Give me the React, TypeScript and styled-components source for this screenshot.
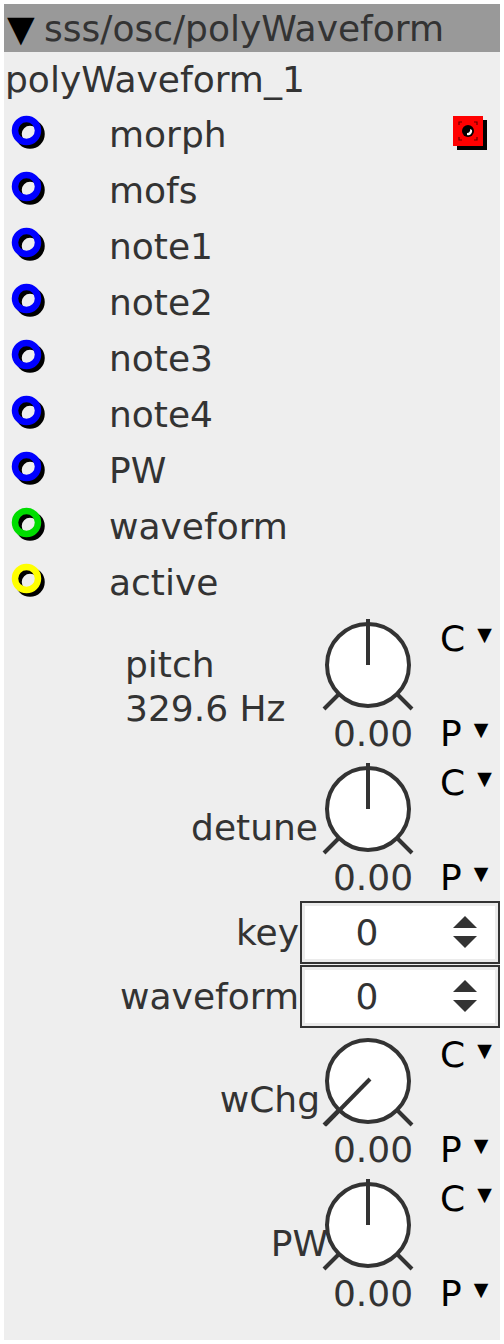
import React from 'react'
import styled, { createGlobalStyle } from 'styled-components'

const GlobalStyle = createGlobalStyle`
  html, body {
    margin: 0;
    padding: 0;
    background: #ffffff;
  }
  body {
    font-family: 'DejaVu Sans', Verdana, sans-serif;
    color: #333333;
  }
`

type JackColor = 'blue' | 'green' | 'yellow'

const inlets: { name: string; color: JackColor; outlet?: boolean }[] = [
  { name: 'morph', color: 'blue', outlet: true },
  { name: 'mofs', color: 'blue' },
  { name: 'note1', color: 'blue' },
  { name: 'note2', color: 'blue' },
  { name: 'note3', color: 'blue' },
  { name: 'note4', color: 'blue' },
  { name: 'PW', color: 'blue' },
  { name: 'waveform', color: 'green' },
  { name: 'active', color: 'yellow' }
]

const jackColors: Record<JackColor, string> = {
  blue: '#0000ff',
  green: '#00dd00',
  yellow: '#ffff00'
}

function Jack({ color }: { color: JackColor }) {
  return (
    <JackSvg width="44" height="44" viewBox="0 0 44 44">
      <circle cx="21" cy="22" r="11.5" fill="none" stroke="#000" strokeWidth="6.5" />
      <circle cx="17.5" cy="18.5" r="11.5" fill="none" stroke={jackColors[color]} strokeWidth="6.5" />
    </JackSvg>
  )
}

function Outlet() {
  return (
    <OutletSvg width="40" height="40" viewBox="0 0 40 40">
      <rect x="6" y="6" width="30" height="30" fill="#000" />
      <rect x="2" y="2" width="30" height="30" fill="#ff0000" />
      <path
        d="M8 11 V8 H11 M23 8 H26 V11 M26 23 V26 H23 M11 26 H8 V23"
        fill="none"
        stroke="#600"
        strokeWidth="1.2"
      />
      <circle cx="17" cy="17" r="6" fill="#000" />
      <path d="M16 21 A4 4 0 0 0 21 16 L19 15 A3 3 0 0 1 16 19 Z" fill="#fff" />
    </OutletSvg>
  )
}

function Knob({ mode }: { mode: 'bipolar' | 'unipolar' }) {
  return (
    <KnobSvg width="96" height="100" viewBox="0 0 96 100">
      <circle cx="48" cy="53" r="41" fill="#fff" stroke="#333" strokeWidth="4" />
      <line x1="19" y1="82" x2="4" y2="97" stroke="#333" strokeWidth="4" />
      <line x1="77" y1="82" x2="92" y2="97" stroke="#333" strokeWidth="4" />
      {mode === 'bipolar' ? (
        <line x1="48" y1="53" x2="48" y2="7" stroke="#333" strokeWidth="4" />
      ) : (
        <line x1="50" y1="51" x2="5" y2="97" stroke="#333" strokeWidth="4" />
      )}
    </KnobSvg>
  )
}

function Spinner() {
  return (
    <SpinnerSvg width="24" height="34" viewBox="0 0 24 34">
      <polygon points="0,13 12,1 24,13" fill="#333" />
      <polygon points="0,21 24,21 12,33" fill="#333" />
    </SpinnerSvg>
  )
}

function KnobControl({
  label,
  sublabel,
  mode = 'bipolar',
  overhang = 0
}: {
  label: string
  sublabel?: string
  mode?: 'bipolar' | 'unipolar'
  overhang?: number
}) {
  return (
    <KnobBlock>
      {sublabel ? (
        <ParamInfo>
          <div>{label}</div>
          <div>{sublabel}</div>
        </ParamInfo>
      ) : (
        <KnobLabel $overhang={overhang}>{label}</KnobLabel>
      )}
      <KnobCell>
        <Knob mode={mode} />
      </KnobCell>
      <ModSelect $top>
        C<Caret>▼</Caret>
      </ModSelect>
      <KnobValue>0.00</KnobValue>
      <ModSelect>
        P<Caret>▼</Caret>
      </ModSelect>
    </KnobBlock>
  )
}

function NumberControl({ label }: { label: string }) {
  return (
    <NumberRow>
      <NumberLabel>{label}</NumberLabel>
      <NumberBox>
        <NumberValue>0</NumberValue>
        <SpinnerCell>
          <Spinner />
        </SpinnerCell>
      </NumberBox>
    </NumberRow>
  )
}

export default function App() {
  return (
    <>
      <GlobalStyle />
      <Panel>
        <Header>
          <HeaderCaret>▼</HeaderCaret>
          sss/osc/polyWaveform
        </Header>
        <InstanceName>polyWaveform_1</InstanceName>
        {inlets.map(inlet => (
          <InletRow key={inlet.name}>
            <Jack color={inlet.color} />
            <InletName>{inlet.name}</InletName>
            {inlet.outlet && <Outlet />}
          </InletRow>
        ))}
        <Controls>
          <KnobControl label="pitch" sublabel="329.6 Hz" />
          <KnobControl label="detune" overhang={-2} />
          <NumberControl label="key" />
          <NumberControl label="waveform" />
          <KnobControl label="wChg" mode="unipolar" />
          <KnobControl label="PW" overhang={8} />
        </Controls>
      </Panel>
    </>
  )
}

const Panel = styled.div`
  margin: 4px;
  width: 496px;
  min-height: 1336px;
  background: #eeeeee;
  box-sizing: border-box;
  padding-bottom: 24px;
`

const Header = styled.div`
  height: 48px;
  background: #999999;
  display: flex;
  align-items: center;
  font-size: 36px;
  color: #333;
  white-space: nowrap;
  overflow: hidden;
`

const HeaderCaret = styled.span`
  color: #000;
  font-size: 36px;
  width: 40px;
  padding-left: 3px;
  box-sizing: border-box;
  overflow: hidden;
`

const InstanceName = styled.div`
  height: 54px;
  display: flex;
  align-items: center;
  padding-left: 1px;
  font-size: 36px;
  color: #333;
`

const InletRow = styled.div`
  height: 56px;
  display: flex;
  align-items: center;
`

const JackSvg = styled.svg`
  flex: none;
  margin-left: 5px;
`

const InletName = styled.span`
  margin-left: 56px;
  margin-right: auto;
  font-size: 36px;
  color: #333;
  white-space: nowrap;
`

const OutletSvg = styled.svg`
  flex: none;
  margin-right: 9px;
`

const Controls = styled.div`
  display: flex;
  flex-direction: column;
  padding-top: 2px;
`

const KnobBlock = styled.div`
  display: grid;
  grid-template-columns: 316px 96px 84px;
  grid-template-rows: 100px 44px;
`

const ParamInfo = styled.div`
  grid-row: 1 / span 2;
  grid-column: 1;
  padding-left: 121px;
  padding-top: 31px;
  font-size: 36px;
  line-height: 44px;
  color: #333;
  white-space: nowrap;
`

const KnobLabel = styled.div<{ $overhang: number }>`
  grid-row: 1 / span 2;
  grid-column: 1;
  justify-self: end;
  margin-right: ${({ $overhang }) => -$overhang}px;
  margin-top: 50px;
  font-size: 36px;
  line-height: 44px;
  color: #333;
  white-space: nowrap;
`

const KnobCell = styled.div`
  grid-column: 2;
  grid-row: 1;
  position: relative;
  z-index: 1;
`

const KnobSvg = styled.svg`
  display: block;
`

const KnobValue = styled.div`
  grid-column: 2;
  grid-row: 2;
  text-align: center;
  font-size: 36px;
  line-height: 44px;
  color: #333;
  white-space: nowrap;
  padding-left: 10px;
`

const ModSelect = styled.div<{ $top?: boolean }>`
  grid-column: 3;
  grid-row: ${({ $top }) => ($top ? 1 : 2)};
  align-self: start;
  margin-top: ${({ $top }) => ($top ? '5px' : '0')};
  padding-left: 24px;
  font-size: 36px;
  line-height: 44px;
  color: #000;
  white-space: nowrap;
  display: flex;
  align-items: flex-start;
`

const Caret = styled.span`
  font-size: 19px;
  line-height: 19px;
  margin-left: 12px;
  margin-top: 8px;
`

const NumberRow = styled.div`
  display: grid;
  grid-template-columns: 296px 200px;
  height: 64px;
  align-items: center;
`

const NumberLabel = styled.div`
  justify-self: end;
  padding-right: 1px;
  font-size: 36px;
  color: #333;
  white-space: nowrap;
`

const NumberBox = styled.div`
  height: 63px;
  box-sizing: border-box;
  border: 2px solid #333;
  background: #fff;
  box-shadow: inset 0 0 0 3px #ebebeb;
  display: flex;
  align-items: center;
`

const NumberValue = styled.div`
  flex: 1;
  text-align: center;
  font-size: 36px;
  color: #333;
`

const SpinnerCell = styled.div`
  width: 66px;
  display: flex;
  justify-content: center;
`

const SpinnerSvg = styled.svg`
  display: block;
`
